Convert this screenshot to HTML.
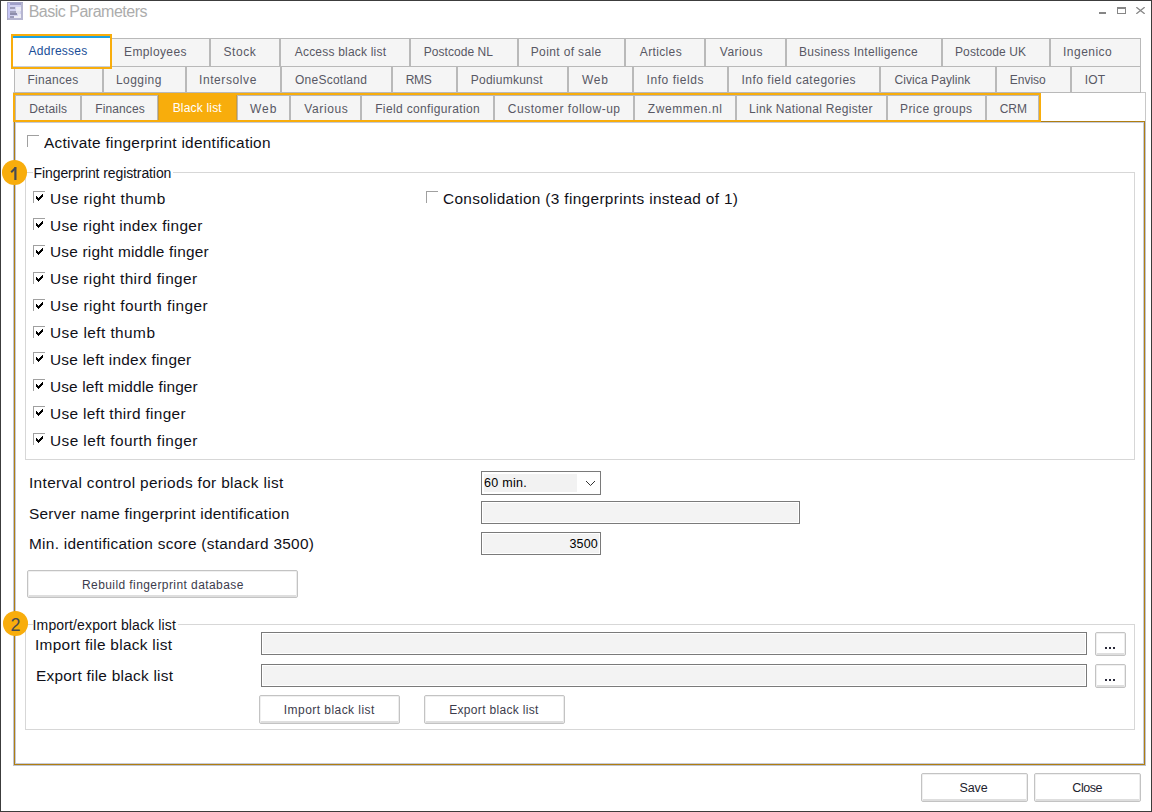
<!DOCTYPE html>
<html><head><meta charset="utf-8"><title>Basic Parameters</title>
<style>
html,body{margin:0;padding:0;width:1152px;height:812px;overflow:hidden;background:#fff;}
#root{position:relative;width:1152px;height:812px;overflow:hidden;font-family:"Liberation Sans", sans-serif;}
#root div{position:absolute;}
.t{white-space:pre;}
.s{}
</style></head><body><div id="root">
<div style="left:0px;top:0px;width:1152px;height:812px;background:#fff;"></div>
<div style="left:0px;top:0px;width:1152px;height:1px;background:#3c3c3c;"></div>
<div style="left:0px;top:811px;width:1152px;height:1px;background:#3c3c3c;"></div>
<div style="left:0px;top:0px;width:1px;height:812px;background:#3c3c3c;"></div>
<div style="left:1151px;top:0px;width:1px;height:812px;background:#3c3c3c;"></div>
<svg style="position:absolute;left:7px;top:2px" width="16" height="18" viewBox="0 0 16 18" shape-rendering="crispEdges">
<rect x="0" y="0" width="16" height="18" fill="#b6b6d0"/>
<rect x="1" y="1" width="13" height="15" fill="#d2d2f0"/>
<rect x="1" y="1" width="2" height="15" fill="#c6c6f6"/>
<rect x="3" y="1" width="11" height="2" fill="#a0a0c8"/>
<rect x="9" y="5" width="5" height="4" fill="#eaeaf4"/>
<rect x="3" y="5" width="5" height="2" fill="#9c9cb8"/>
<rect x="8" y="9" width="5" height="3" fill="#e2e2ee"/>
<rect x="3" y="9" width="6" height="2" fill="#a2a2bc"/>
<rect x="11" y="12" width="3" height="2" fill="#ececf4"/>
<rect x="3" y="11" width="7" height="2" fill="#8e8eac"/>
<rect x="7" y="14" width="7" height="2" fill="#eeeef6"/>
<rect x="3" y="14" width="4" height="2" fill="#9c9cb8"/>
<rect x="0" y="0" width="16" height="1" fill="#a8a8c8"/>
<rect x="0" y="0" width="1" height="18" fill="#a8a8c8"/>
</svg>
<div class="t" style="left:28.70px;top:4.16px;font-size:16px;line-height:16px;color:#acacac;letter-spacing:-0.497px;">Basic Parameters</div>
<div style="left:1099px;top:12px;width:7px;height:2px;background:#868686;"></div>
<div style="left:1117px;top:7px;width:9px;height:7px;border:1px solid #868686;border-top-width:2px;box-sizing:border-box;"></div>
<svg style="position:absolute;left:1136px;top:7px" width="9" height="7" viewBox="0 0 9 7">
<path d="M0.3 0.2 L8.7 6.8 M8.7 0.2 L0.3 6.8" stroke="#868686" stroke-width="1.3"/></svg>
<div style="left:13px;top:92px;width:1133px;height:40px;background:#fff;border:1px solid #c8c8c8;border-bottom:0;box-sizing:border-box;"></div>
<div style="left:13px;top:121px;width:1133px;height:645px;border:1px solid #bfc3cf;box-sizing:border-box;"></div>
<div style="left:14px;top:121px;width:1131px;height:644px;border:1px solid #b07e10;box-sizing:border-box;"></div>
<div style="left:15px;top:122px;width:1129px;height:642px;border:1px solid #c6cad6;box-sizing:border-box;"></div>
<div style="left:111px;top:38px;width:99px;height:29px;background:#f5f5f5;border:1px solid #b9b9b9;box-sizing:border-box;"></div>
<div style="left:210px;top:38px;width:70px;height:29px;background:#f5f5f5;border:1px solid #b9b9b9;box-sizing:border-box;"></div>
<div style="left:280px;top:38px;width:130px;height:29px;background:#f5f5f5;border:1px solid #b9b9b9;box-sizing:border-box;"></div>
<div style="left:410px;top:38px;width:108px;height:29px;background:#f5f5f5;border:1px solid #b9b9b9;box-sizing:border-box;"></div>
<div style="left:518px;top:38px;width:107px;height:29px;background:#f5f5f5;border:1px solid #b9b9b9;box-sizing:border-box;"></div>
<div style="left:625px;top:38px;width:80px;height:29px;background:#f5f5f5;border:1px solid #b9b9b9;box-sizing:border-box;"></div>
<div style="left:705px;top:38px;width:81px;height:29px;background:#f5f5f5;border:1px solid #b9b9b9;box-sizing:border-box;"></div>
<div style="left:786px;top:38px;width:156px;height:29px;background:#f5f5f5;border:1px solid #b9b9b9;box-sizing:border-box;"></div>
<div style="left:942px;top:38px;width:108px;height:29px;background:#f5f5f5;border:1px solid #b9b9b9;box-sizing:border-box;"></div>
<div style="left:1050px;top:38px;width:91px;height:29px;background:#f5f5f5;border:1px solid #b9b9b9;box-sizing:border-box;"></div>
<div style="left:14px;top:66px;width:89px;height:27px;background:#f5f5f5;border:1px solid #b9b9b9;box-sizing:border-box;"></div>
<div style="left:103px;top:66px;width:83px;height:27px;background:#f5f5f5;border:1px solid #b9b9b9;box-sizing:border-box;"></div>
<div style="left:186px;top:66px;width:95px;height:27px;background:#f5f5f5;border:1px solid #b9b9b9;box-sizing:border-box;"></div>
<div style="left:281px;top:66px;width:111px;height:27px;background:#f5f5f5;border:1px solid #b9b9b9;box-sizing:border-box;"></div>
<div style="left:392px;top:66px;width:65px;height:27px;background:#f5f5f5;border:1px solid #b9b9b9;box-sizing:border-box;"></div>
<div style="left:457px;top:66px;width:111px;height:27px;background:#f5f5f5;border:1px solid #b9b9b9;box-sizing:border-box;"></div>
<div style="left:568px;top:66px;width:65px;height:27px;background:#f5f5f5;border:1px solid #b9b9b9;box-sizing:border-box;"></div>
<div style="left:633px;top:66px;width:95px;height:27px;background:#f5f5f5;border:1px solid #b9b9b9;box-sizing:border-box;"></div>
<div style="left:728px;top:66px;width:152px;height:27px;background:#f5f5f5;border:1px solid #b9b9b9;box-sizing:border-box;"></div>
<div style="left:880px;top:66px;width:116px;height:27px;background:#f5f5f5;border:1px solid #b9b9b9;box-sizing:border-box;"></div>
<div style="left:996px;top:66px;width:75px;height:27px;background:#f5f5f5;border:1px solid #b9b9b9;box-sizing:border-box;"></div>
<div style="left:1071px;top:66px;width:70px;height:27px;background:#f5f5f5;border:1px solid #b9b9b9;box-sizing:border-box;"></div>
<div style="left:15px;top:95px;width:66px;height:27px;background:#f5f5f5;border:1px solid #b9b9b9;box-sizing:border-box;"></div>
<div style="left:81px;top:95px;width:77px;height:27px;background:#f5f5f5;border:1px solid #b9b9b9;box-sizing:border-box;"></div>
<div style="left:158px;top:95px;width:79px;height:27px;background:#f5f5f5;border:1px solid #b9b9b9;box-sizing:border-box;"></div>
<div style="left:237px;top:95px;width:53px;height:27px;background:#f5f5f5;border:1px solid #b9b9b9;box-sizing:border-box;"></div>
<div style="left:290px;top:95px;width:71px;height:27px;background:#f5f5f5;border:1px solid #b9b9b9;box-sizing:border-box;"></div>
<div style="left:361px;top:95px;width:133px;height:27px;background:#f5f5f5;border:1px solid #b9b9b9;box-sizing:border-box;"></div>
<div style="left:494px;top:95px;width:140px;height:27px;background:#f5f5f5;border:1px solid #b9b9b9;box-sizing:border-box;"></div>
<div style="left:634px;top:95px;width:102px;height:27px;background:#f5f5f5;border:1px solid #b9b9b9;box-sizing:border-box;"></div>
<div style="left:736px;top:95px;width:151px;height:27px;background:#f5f5f5;border:1px solid #b9b9b9;box-sizing:border-box;"></div>
<div style="left:887px;top:95px;width:99px;height:27px;background:#f5f5f5;border:1px solid #b9b9b9;box-sizing:border-box;"></div>
<div style="left:986px;top:95px;width:53px;height:27px;background:#f5f5f5;border:1px solid #b9b9b9;box-sizing:border-box;"></div>
<div style="left:11px;top:34px;width:101px;height:35px;background:#fff;border:2px solid #f8ad0c;box-sizing:border-box;"></div>
<div style="left:13px;top:36px;width:97px;height:2px;background:#1ba1e2;"></div>
<div style="left:13px;top:66px;width:97px;height:1px;background:#c9cfd8;"></div>
<div style="left:13px;top:93px;width:1028px;height:29px;border:2px solid #f8ad0c;box-sizing:border-box;"></div>
<div style="left:158px;top:93px;width:79px;height:29px;background:#f8ad0c;"></div>
<div style="left:158px;top:95px;width:1px;height:25px;background:#cf9c30;"></div>
<div style="left:236px;top:95px;width:1px;height:25px;background:#cf9c30;"></div>
<div class="t" style="left:28.50px;top:44.84px;font-size:12px;line-height:12px;color:#1a4e98;letter-spacing:0.264px;">Addresses</div>
<div class="t" style="left:124.00px;top:45.84px;font-size:12px;line-height:12px;color:#585864;letter-spacing:0.386px;">Employees</div>
<div class="t" style="left:223.50px;top:45.84px;font-size:12px;line-height:12px;color:#585864;letter-spacing:0.550px;">Stock</div>
<div class="t" style="left:294.75px;top:45.84px;font-size:12px;line-height:12px;color:#585864;letter-spacing:0.200px;">Access black list</div>
<div class="t" style="left:423.75px;top:45.84px;font-size:12px;line-height:12px;color:#585864;letter-spacing:0.050px;">Postcode NL</div>
<div class="t" style="left:530.75px;top:45.84px;font-size:12px;line-height:12px;color:#585864;letter-spacing:0.366px;">Point of sale</div>
<div class="t" style="left:639.80px;top:45.84px;font-size:12px;line-height:12px;color:#585864;letter-spacing:0.357px;">Articles</div>
<div class="t" style="left:719.80px;top:45.84px;font-size:12px;line-height:12px;color:#585864;letter-spacing:0.467px;">Various</div>
<div class="t" style="left:799.00px;top:45.84px;font-size:12px;line-height:12px;color:#585864;letter-spacing:0.300px;">Business Intelligence</div>
<div class="t" style="left:955.00px;top:45.84px;font-size:12px;line-height:12px;color:#585864;letter-spacing:0.100px;">Postcode UK</div>
<div class="t" style="left:1063.00px;top:45.84px;font-size:12px;line-height:12px;color:#585864;letter-spacing:0.486px;">Ingenico</div>
<div class="t" style="left:27.50px;top:74.14px;font-size:12px;line-height:12px;color:#585864;letter-spacing:0.287px;">Finances</div>
<div class="t" style="left:116.00px;top:74.14px;font-size:12px;line-height:12px;color:#585864;letter-spacing:0.449px;">Logging</div>
<div class="t" style="left:199.00px;top:74.14px;font-size:12px;line-height:12px;color:#585864;letter-spacing:0.588px;">Intersolve</div>
<div class="t" style="left:295.00px;top:74.14px;font-size:12px;line-height:12px;color:#585864;letter-spacing:0.250px;">OneScotland</div>
<div class="t" style="left:405.75px;top:74.14px;font-size:12px;line-height:12px;color:#585864;letter-spacing:-0.300px;">RMS</div>
<div class="t" style="left:470.75px;top:74.14px;font-size:12px;line-height:12px;color:#585864;letter-spacing:0.250px;">Podiumkunst</div>
<div class="t" style="left:582.00px;top:74.14px;font-size:12px;line-height:12px;color:#585864;letter-spacing:0.700px;">Web</div>
<div class="t" style="left:646.50px;top:74.14px;font-size:12px;line-height:12px;color:#585864;letter-spacing:0.560px;">Info fields</div>
<div class="t" style="left:741.50px;top:74.14px;font-size:12px;line-height:12px;color:#585864;letter-spacing:0.500px;">Info field categories</div>
<div class="t" style="left:894.50px;top:74.14px;font-size:12px;line-height:12px;color:#585864;letter-spacing:0.086px;">Civica Paylink</div>
<div class="t" style="left:1009.75px;top:74.14px;font-size:12px;line-height:12px;color:#585864;letter-spacing:0.000px;">Enviso</div>
<div class="t" style="left:1084.75px;top:74.14px;font-size:12px;line-height:12px;color:#585864;letter-spacing:0.200px;">IOT</div>
<div class="t" style="left:29.25px;top:103.24px;font-size:12px;line-height:12px;color:#585864;letter-spacing:0.183px;">Details</div>
<div class="t" style="left:95.20px;top:103.24px;font-size:12px;line-height:12px;color:#585864;letter-spacing:0.113px;">Finances</div>
<div class="t" style="left:172.70px;top:102.04px;font-size:12px;line-height:12px;color:#fff;letter-spacing:0.179px;">Black list</div>
<div class="t" style="left:250.00px;top:103.24px;font-size:12px;line-height:12px;color:#585864;letter-spacing:0.950px;">Web</div>
<div class="t" style="left:304.25px;top:103.24px;font-size:12px;line-height:12px;color:#585864;letter-spacing:0.615px;">Various</div>
<div class="t" style="left:375.20px;top:103.24px;font-size:12px;line-height:12px;color:#585864;letter-spacing:0.354px;">Field configuration</div>
<div class="t" style="left:507.75px;top:103.24px;font-size:12px;line-height:12px;color:#585864;letter-spacing:0.525px;">Customer follow-up</div>
<div class="t" style="left:647.70px;top:103.24px;font-size:12px;line-height:12px;color:#585864;letter-spacing:0.623px;">Zwemmen.nl</div>
<div class="t" style="left:749.00px;top:103.24px;font-size:12px;line-height:12px;color:#585864;letter-spacing:0.295px;">Link National Register</div>
<div class="t" style="left:900.00px;top:103.24px;font-size:12px;line-height:12px;color:#585864;letter-spacing:0.428px;">Price groups</div>
<div class="t" style="left:999.75px;top:103.24px;font-size:12px;line-height:12px;color:#585864;letter-spacing:-0.050px;">CRM</div>
<div style="left:27px;top:135px;width:12px;height:12px;border-top:1px solid #a0a0a0;border-left:1px solid #a0a0a0;box-sizing:border-box;"></div>
<div class="t s" style="left:44.00px;top:136.05px;font-size:14px;line-height:14px;color:#101018;letter-spacing:0.243px;transform:scaleX(1.1);transform-origin:0 0;">Activate fingerprint identification</div>
<div style="left:25px;top:172px;width:1110px;height:288px;border:1px solid #d7d7d7;box-sizing:border-box;"></div>
<div style="left:33px;top:165px;width:140px;height:14px;background:#fff;"></div>
<div class="t s" style="left:33.60px;top:165.75px;font-size:14px;line-height:14px;color:#101018;letter-spacing:-0.100px;">Fingerprint registration</div>
<div style="left:1.5px;top:160.0px;width:25.5px;height:25px;border-radius:50%;background:#f8ad0c;"></div>
<svg style="position:absolute;left:0;top:150px" width="40" height="40" viewBox="0 150 40 40"><rect x="14.3" y="167" width="2.2" height="13" fill="#464a52"/><path d="M11.2 172.2 L15.6 167.8" stroke="#464a52" stroke-width="2" fill="none"/></svg>
<div style="left:33px;top:191px;width:12px;height:12px;border-top:1px solid #a0a0a0;border-left:1px solid #a0a0a0;box-sizing:border-box;"></div>
<svg style="position:absolute;left:36px;top:194px" width="8" height="7" viewBox="0 0 8 7" shape-rendering="crispEdges"><path d="M6 0h1v1h-1z M5 1h2v1h-2z M0 2h1v1h-1z M4 2h3v1h-3z M0 3h2v1h-2z M3 3h3v1h-3z M0 4h5v1h-5z M1 5h3v1h-3z M2 6h1v1h-1z" fill="#000"/></svg>
<div class="t s" style="left:49.60px;top:191.65px;font-size:14px;line-height:14px;color:#101018;letter-spacing:0.422px;transform:scaleX(1.1);transform-origin:0 0;">Use right thumb</div>
<div style="left:33px;top:218px;width:12px;height:12px;border-top:1px solid #a0a0a0;border-left:1px solid #a0a0a0;box-sizing:border-box;"></div>
<svg style="position:absolute;left:36px;top:221px" width="8" height="7" viewBox="0 0 8 7" shape-rendering="crispEdges"><path d="M6 0h1v1h-1z M5 1h2v1h-2z M0 2h1v1h-1z M4 2h3v1h-3z M0 3h2v1h-2z M3 3h3v1h-3z M0 4h5v1h-5z M1 5h3v1h-3z M2 6h1v1h-1z" fill="#000"/></svg>
<div class="t s" style="left:49.60px;top:218.55px;font-size:14px;line-height:14px;color:#101018;letter-spacing:0.294px;transform:scaleX(1.1);transform-origin:0 0;">Use right index finger</div>
<div style="left:33px;top:245px;width:12px;height:12px;border-top:1px solid #a0a0a0;border-left:1px solid #a0a0a0;box-sizing:border-box;"></div>
<svg style="position:absolute;left:36px;top:248px" width="8" height="7" viewBox="0 0 8 7" shape-rendering="crispEdges"><path d="M6 0h1v1h-1z M5 1h2v1h-2z M0 2h1v1h-1z M4 2h3v1h-3z M0 3h2v1h-2z M3 3h3v1h-3z M0 4h5v1h-5z M1 5h3v1h-3z M2 6h1v1h-1z" fill="#000"/></svg>
<div class="t s" style="left:49.60px;top:245.45px;font-size:14px;line-height:14px;color:#101018;letter-spacing:0.187px;transform:scaleX(1.1);transform-origin:0 0;">Use right middle finger</div>
<div style="left:33px;top:272px;width:12px;height:12px;border-top:1px solid #a0a0a0;border-left:1px solid #a0a0a0;box-sizing:border-box;"></div>
<svg style="position:absolute;left:36px;top:275px" width="8" height="7" viewBox="0 0 8 7" shape-rendering="crispEdges"><path d="M6 0h1v1h-1z M5 1h2v1h-2z M0 2h1v1h-1z M4 2h3v1h-3z M0 3h2v1h-2z M3 3h3v1h-3z M0 4h5v1h-5z M1 5h3v1h-3z M2 6h1v1h-1z" fill="#000"/></svg>
<div class="t s" style="left:49.60px;top:272.35px;font-size:14px;line-height:14px;color:#101018;letter-spacing:0.369px;transform:scaleX(1.1);transform-origin:0 0;">Use right third finger</div>
<div style="left:33px;top:299px;width:12px;height:12px;border-top:1px solid #a0a0a0;border-left:1px solid #a0a0a0;box-sizing:border-box;"></div>
<svg style="position:absolute;left:36px;top:302px" width="8" height="7" viewBox="0 0 8 7" shape-rendering="crispEdges"><path d="M6 0h1v1h-1z M5 1h2v1h-2z M0 2h1v1h-1z M4 2h3v1h-3z M0 3h2v1h-2z M3 3h3v1h-3z M0 4h5v1h-5z M1 5h3v1h-3z M2 6h1v1h-1z" fill="#000"/></svg>
<div class="t s" style="left:49.60px;top:299.25px;font-size:14px;line-height:14px;color:#101018;letter-spacing:0.396px;transform:scaleX(1.1);transform-origin:0 0;">Use right fourth finger</div>
<div style="left:33px;top:326px;width:12px;height:12px;border-top:1px solid #a0a0a0;border-left:1px solid #a0a0a0;box-sizing:border-box;"></div>
<svg style="position:absolute;left:36px;top:329px" width="8" height="7" viewBox="0 0 8 7" shape-rendering="crispEdges"><path d="M6 0h1v1h-1z M5 1h2v1h-2z M0 2h1v1h-1z M4 2h3v1h-3z M0 3h2v1h-2z M3 3h3v1h-3z M0 4h5v1h-5z M1 5h3v1h-3z M2 6h1v1h-1z" fill="#000"/></svg>
<div class="t s" style="left:49.60px;top:326.15px;font-size:14px;line-height:14px;color:#101018;letter-spacing:0.396px;transform:scaleX(1.1);transform-origin:0 0;">Use left thumb</div>
<div style="left:33px;top:352px;width:12px;height:12px;border-top:1px solid #a0a0a0;border-left:1px solid #a0a0a0;box-sizing:border-box;"></div>
<svg style="position:absolute;left:36px;top:355px" width="8" height="7" viewBox="0 0 8 7" shape-rendering="crispEdges"><path d="M6 0h1v1h-1z M5 1h2v1h-2z M0 2h1v1h-1z M4 2h3v1h-3z M0 3h2v1h-2z M3 3h3v1h-3z M0 4h5v1h-5z M1 5h3v1h-3z M2 6h1v1h-1z" fill="#000"/></svg>
<div class="t s" style="left:49.60px;top:353.05px;font-size:14px;line-height:14px;color:#101018;letter-spacing:0.230px;transform:scaleX(1.1);transform-origin:0 0;">Use left index finger</div>
<div style="left:33px;top:379px;width:12px;height:12px;border-top:1px solid #a0a0a0;border-left:1px solid #a0a0a0;box-sizing:border-box;"></div>
<svg style="position:absolute;left:36px;top:382px" width="8" height="7" viewBox="0 0 8 7" shape-rendering="crispEdges"><path d="M6 0h1v1h-1z M5 1h2v1h-2z M0 2h1v1h-1z M4 2h3v1h-3z M0 3h2v1h-2z M3 3h3v1h-3z M0 4h5v1h-5z M1 5h3v1h-3z M2 6h1v1h-1z" fill="#000"/></svg>
<div class="t s" style="left:49.60px;top:379.95px;font-size:14px;line-height:14px;color:#101018;letter-spacing:0.132px;transform:scaleX(1.1);transform-origin:0 0;">Use left middle finger</div>
<div style="left:33px;top:406px;width:12px;height:12px;border-top:1px solid #a0a0a0;border-left:1px solid #a0a0a0;box-sizing:border-box;"></div>
<svg style="position:absolute;left:36px;top:409px" width="8" height="7" viewBox="0 0 8 7" shape-rendering="crispEdges"><path d="M6 0h1v1h-1z M5 1h2v1h-2z M0 2h1v1h-1z M4 2h3v1h-3z M0 3h2v1h-2z M3 3h3v1h-3z M0 4h5v1h-5z M1 5h3v1h-3z M2 6h1v1h-1z" fill="#000"/></svg>
<div class="t s" style="left:49.60px;top:406.85px;font-size:14px;line-height:14px;color:#101018;letter-spacing:0.290px;transform:scaleX(1.1);transform-origin:0 0;">Use left third finger</div>
<div style="left:33px;top:433px;width:12px;height:12px;border-top:1px solid #a0a0a0;border-left:1px solid #a0a0a0;box-sizing:border-box;"></div>
<svg style="position:absolute;left:36px;top:436px" width="8" height="7" viewBox="0 0 8 7" shape-rendering="crispEdges"><path d="M6 0h1v1h-1z M5 1h2v1h-2z M0 2h1v1h-1z M4 2h3v1h-3z M0 3h2v1h-2z M3 3h3v1h-3z M0 4h5v1h-5z M1 5h3v1h-3z M2 6h1v1h-1z" fill="#000"/></svg>
<div class="t s" style="left:49.60px;top:433.75px;font-size:14px;line-height:14px;color:#101018;letter-spacing:0.379px;transform:scaleX(1.1);transform-origin:0 0;">Use left fourth finger</div>
<div style="left:426px;top:191px;width:12px;height:12px;border-top:1px solid #a0a0a0;border-left:1px solid #a0a0a0;box-sizing:border-box;"></div>
<div class="t s" style="left:443.40px;top:191.55px;font-size:14px;line-height:14px;color:#101018;letter-spacing:0.307px;transform:scaleX(1.1);transform-origin:0 0;">Consolidation (3 fingerprints instead of 1)</div>
<div class="t s" style="left:28.80px;top:476.45px;font-size:14px;line-height:14px;color:#101018;letter-spacing:0.309px;transform:scaleX(1.1);transform-origin:0 0;">Interval control periods for black list</div>
<div class="t s" style="left:28.80px;top:506.75px;font-size:14px;line-height:14px;color:#101018;letter-spacing:0.231px;transform:scaleX(1.1);transform-origin:0 0;">Server name fingerprint identification</div>
<div class="t s" style="left:28.80px;top:536.75px;font-size:14px;line-height:14px;color:#101018;letter-spacing:0.249px;transform:scaleX(1.1);transform-origin:0 0;">Min. identification score (standard 3500)</div>
<div style="left:481px;top:471px;width:120px;height:24px;background:#fff;border:1px solid #7a7a7a;box-sizing:border-box;"></div>
<div style="left:484px;top:474px;width:93px;height:18px;background:#f2f2f2;"></div>
<div class="t s" style="left:484.00px;top:477.42px;font-size:12.5px;line-height:12.5px;color:#000;letter-spacing:0.300px;">60 min.</div>
<svg style="position:absolute;left:585px;top:480px" width="11" height="7" viewBox="0 0 11 7"><path d="M1 1 L5.5 5.5 L10 1" stroke="#333" stroke-width="1" fill="none"/></svg>
<div style="left:481px;top:501px;width:319px;height:23px;background:#f3f3f3;border:1px solid #7a7a7a;box-shadow:inset 0 0 0 1px #fff;box-sizing:border-box;"></div>
<div style="left:481px;top:532px;width:120px;height:23px;background:#f3f3f3;border:1px solid #7a7a7a;box-shadow:inset 0 0 0 1px #fff;box-sizing:border-box;"></div>
<div class="t" style="left:481px;top:537.8px;width:117px;text-align:right;font-size:12.5px;line-height:12.5px;color:#000;letter-spacing:0.2px;">3500</div>
<div style="left:27px;top:570px;width:271px;height:28px;box-sizing:border-box;border:1px solid #c3c3c3;border-radius:2px;background:#fff;box-shadow:inset 1px 1px 0 #f0f0f0, inset -1px 0 0 #ececec, inset 0 -2px 0 #dedede;"></div>
<div class="t" style="left:82.00px;top:579.34px;font-size:12px;line-height:12px;color:#3c3c4c;letter-spacing:0.416px;">Rebuild fingerprint database</div>
<div style="left:25px;top:624px;width:1110px;height:106px;border:1px solid #d7d7d7;box-sizing:border-box;"></div>
<div style="left:33px;top:616px;width:145px;height:14px;background:#fff;"></div>
<div style="left:2.5px;top:611.1px;width:25.5px;height:25px;border-radius:50%;background:#f8ad0c;"></div>
<div class="t" style="left:10.40px;top:615.96px;font-size:18px;line-height:18px;color:#464a52;letter-spacing:0.000px;">2</div>
<div class="t s" style="left:32.60px;top:618.15px;font-size:14px;line-height:14px;color:#101018;letter-spacing:0.137px;">Import/export black list</div>
<div class="t s" style="left:34.80px;top:638.15px;font-size:14px;line-height:14px;color:#101018;letter-spacing:0.260px;transform:scaleX(1.1);transform-origin:0 0;">Import file black list</div>
<div class="t s" style="left:35.50px;top:668.90px;font-size:14px;line-height:14px;color:#101018;letter-spacing:0.224px;transform:scaleX(1.1);transform-origin:0 0;">Export file black list</div>
<div style="left:261px;top:632px;width:826px;height:23px;background:#f3f3f3;border:1px solid #7a7a7a;box-shadow:inset 0 0 0 1px #fff;box-sizing:border-box;"></div>
<div style="left:261px;top:664px;width:826px;height:23px;background:#f3f3f3;border:1px solid #7a7a7a;box-shadow:inset 0 0 0 1px #fff;box-sizing:border-box;"></div>
<div style="left:1095px;top:632px;width:31px;height:24px;box-sizing:border-box;border:1px solid #c3c3c3;border-radius:2px;background:#fff;box-shadow:inset 1px 1px 0 #f0f0f0, inset -1px 0 0 #ececec, inset 0 -2px 0 #dedede;"></div>
<div style="left:1105px;top:647px;width:2px;height:2px;background:#2a2a3a;"></div>
<div style="left:1109px;top:647px;width:2px;height:2px;background:#2a2a3a;"></div>
<div style="left:1113px;top:647px;width:2px;height:2px;background:#2a2a3a;"></div>
<div style="left:1095px;top:664px;width:31px;height:24px;box-sizing:border-box;border:1px solid #c3c3c3;border-radius:2px;background:#fff;box-shadow:inset 1px 1px 0 #f0f0f0, inset -1px 0 0 #ececec, inset 0 -2px 0 #dedede;"></div>
<div style="left:1105px;top:679px;width:2px;height:2px;background:#2a2a3a;"></div>
<div style="left:1109px;top:679px;width:2px;height:2px;background:#2a2a3a;"></div>
<div style="left:1113px;top:679px;width:2px;height:2px;background:#2a2a3a;"></div>
<div style="left:259px;top:695px;width:141px;height:29px;box-sizing:border-box;border:1px solid #c3c3c3;border-radius:2px;background:#fff;box-shadow:inset 1px 1px 0 #f0f0f0, inset -1px 0 0 #ececec, inset 0 -2px 0 #dedede;"></div>
<div class="t" style="left:283.80px;top:703.84px;font-size:12px;line-height:12px;color:#3c3c4c;letter-spacing:0.452px;">Import black list</div>
<div style="left:424px;top:695px;width:141px;height:29px;box-sizing:border-box;border:1px solid #c3c3c3;border-radius:2px;background:#fff;box-shadow:inset 1px 1px 0 #f0f0f0, inset -1px 0 0 #ececec, inset 0 -2px 0 #dedede;"></div>
<div class="t" style="left:449.20px;top:703.84px;font-size:12px;line-height:12px;color:#3c3c4c;letter-spacing:0.325px;">Export black list</div>
<div style="left:921px;top:773px;width:107px;height:29px;box-sizing:border-box;border:1px solid #c3c3c3;border-radius:2px;background:#fff;box-shadow:inset 1px 1px 0 #f0f0f0, inset -1px 0 0 #ececec, inset 0 -2px 0 #dedede;"></div>
<div class="t s" style="left:959.60px;top:782.42px;font-size:12.5px;line-height:12.5px;color:#1e1e2e;letter-spacing:-0.133px;">Save</div>
<div style="left:1034px;top:773px;width:107px;height:29px;box-sizing:border-box;border:1px solid #c3c3c3;border-radius:2px;background:#fff;box-shadow:inset 1px 1px 0 #f0f0f0, inset -1px 0 0 #ececec, inset 0 -2px 0 #dedede;"></div>
<div class="t s" style="left:1072.30px;top:782.42px;font-size:12.5px;line-height:12.5px;color:#1e1e2e;letter-spacing:-0.422px;">Close</div>
</div></body></html>
